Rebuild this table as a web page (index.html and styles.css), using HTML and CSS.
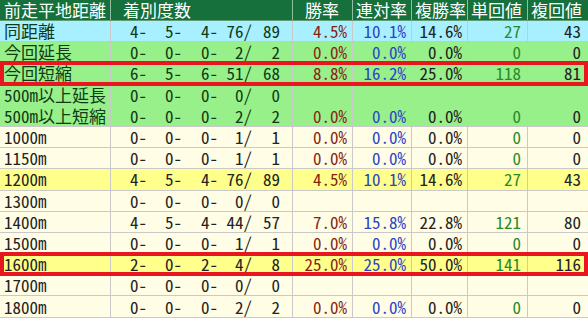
FILE: index.html
```html
<!DOCTYPE html>
<html lang="ja">
<head>
<meta charset="utf-8">
<link rel="stylesheet" href="styles.css">
</head>
<body>
<div class="table">
  <div class="row head">
    <div class="c l">前走平地距離</div>
    <div class="c h2">着別度数</div>
    <div class="c h3">勝率</div>
    <div class="c hx">連対率</div>
    <div class="c hx">複勝率</div>
    <div class="c hx">単回値</div>
    <div class="c hx">複回値</div>
  </div>

  <div class="row cyan">
    <div class="c l">同距離</div>
    <div class="c cnt"><span>4-</span><span>5-</span><span>4-</span><span>76/</span><span>89</span></div>
    <div class="c n win">4.5%</div><div class="c n ren">10.1%</div><div class="c n fuku">14.6%</div><div class="c n tan">27</div><div class="c n fk">43</div>
  </div>
  <div class="row green">
    <div class="c l">今回延長</div>
    <div class="c cnt"><span>0-</span><span>0-</span><span>0-</span><span>2/</span><span>2</span></div>
    <div class="c n win">0.0%</div><div class="c n ren">0.0%</div><div class="c n fuku">0.0%</div><div class="c n tan">0</div><div class="c n fk">0</div>
  </div>
  <div class="row green mark">
    <div class="c l">今回短縮</div>
    <div class="c cnt"><span>6-</span><span>5-</span><span>6-</span><span>51/</span><span>68</span></div>
    <div class="c n win">8.8%</div><div class="c n ren">16.2%</div><div class="c n fuku">25.0%</div><div class="c n tan">118</div><div class="c n fk">81</div>
  </div>
  <div class="row green">
    <div class="c l">500m以上延長</div>
    <div class="c cnt"><span>0-</span><span>0-</span><span>0-</span><span>0/</span><span>0</span></div>
    <div class="c n"></div><div class="c n"></div><div class="c n"></div><div class="c n"></div><div class="c n"></div>
  </div>
  <div class="row green">
    <div class="c l">500m以上短縮</div>
    <div class="c cnt"><span>0-</span><span>0-</span><span>0-</span><span>2/</span><span>2</span></div>
    <div class="c n win">0.0%</div><div class="c n ren">0.0%</div><div class="c n fuku">0.0%</div><div class="c n tan">0</div><div class="c n fk">0</div>
  </div>
  <div class="row cream">
    <div class="c l">1000m</div>
    <div class="c cnt"><span>0-</span><span>0-</span><span>0-</span><span>1/</span><span>1</span></div>
    <div class="c n win">0.0%</div><div class="c n ren">0.0%</div><div class="c n fuku">0.0%</div><div class="c n tan">0</div><div class="c n fk">0</div>
  </div>
  <div class="row cream">
    <div class="c l">1150m</div>
    <div class="c cnt"><span>0-</span><span>0-</span><span>0-</span><span>1/</span><span>1</span></div>
    <div class="c n win">0.0%</div><div class="c n ren">0.0%</div><div class="c n fuku">0.0%</div><div class="c n tan">0</div><div class="c n fk">0</div>
  </div>
  <div class="row yellow">
    <div class="c l">1200m</div>
    <div class="c cnt"><span>4-</span><span>5-</span><span>4-</span><span>76/</span><span>89</span></div>
    <div class="c n win">4.5%</div><div class="c n ren">10.1%</div><div class="c n fuku">14.6%</div><div class="c n tan">27</div><div class="c n fk">43</div>
  </div>
  <div class="row cream">
    <div class="c l">1300m</div>
    <div class="c cnt"><span>0-</span><span>0-</span><span>0-</span><span>0/</span><span>0</span></div>
    <div class="c n"></div><div class="c n"></div><div class="c n"></div><div class="c n"></div><div class="c n"></div>
  </div>
  <div class="row cream">
    <div class="c l">1400m</div>
    <div class="c cnt"><span>4-</span><span>5-</span><span>4-</span><span>44/</span><span>57</span></div>
    <div class="c n win">7.0%</div><div class="c n ren">15.8%</div><div class="c n fuku">22.8%</div><div class="c n tan">121</div><div class="c n fk">80</div>
  </div>
  <div class="row cream">
    <div class="c l">1500m</div>
    <div class="c cnt"><span>0-</span><span>0-</span><span>0-</span><span>1/</span><span>1</span></div>
    <div class="c n win">0.0%</div><div class="c n ren">0.0%</div><div class="c n fuku">0.0%</div><div class="c n tan">0</div><div class="c n fk">0</div>
  </div>
  <div class="row yellow mark">
    <div class="c l">1600m</div>
    <div class="c cnt"><span>2-</span><span>0-</span><span>2-</span><span>4/</span><span>8</span></div>
    <div class="c n win">25.0%</div><div class="c n ren">25.0%</div><div class="c n fuku">50.0%</div><div class="c n tan">141</div><div class="c n fk">116</div>
  </div>
  <div class="row cream">
    <div class="c l">1700m</div>
    <div class="c cnt"><span>0-</span><span>0-</span><span>0-</span><span>0/</span><span>0</span></div>
    <div class="c n"></div><div class="c n"></div><div class="c n"></div><div class="c n"></div><div class="c n"></div>
  </div>
  <div class="row cream">
    <div class="c l">1800m</div>
    <div class="c cnt"><span>0-</span><span>0-</span><span>0-</span><span>2/</span><span>2</span></div>
    <div class="c n win">0.0%</div><div class="c n ren">0.0%</div><div class="c n fuku">0.0%</div><div class="c n tan">0</div><div class="c n fk">0</div>
  </div>
</div>
</body>
</html>
```
FILE: styles.css
```css
html, body {
  margin: 0;
  padding: 0;
  background: #ffffff;
}

.table {
  width: 588px;
  font-family: "Noto Sans CJK JP", "DejaVu Sans", sans-serif;
  font-size: 17px;
  line-height: 20px;
  font-feature-settings: "hwid";
  color: #222;
}

.row {
  display: grid;
  grid-template-columns: 111px 182px 60px 59px 56px 60px 60px;
  height: 21.2px;
  box-sizing: border-box;
  border-bottom: 1px solid #c9c9c9;
  position: relative;
}

.c {
  box-sizing: border-box;
  border-right: 1px solid #c9c9c9;
  white-space: pre;
  display: flex;
  align-items: center;
}

.c:last-child {
  border-right: none;
}

.l {
  padding-left: 4px;
}

.head {
  height: 21px;
  background: #15703c;
  color: #ffffff;
  border-bottom: 1px solid #5f9c78;
}

.head .c {
  border-right-color: #8fbea0;
}

.head .h2 { padding-left: 12px; }
.head .h3 { padding-left: 12px; }
.head .hx { padding-left: 3px; }

.cnt {
  display: grid;
  grid-template-columns: 36px 35px 36px 34px 28px;
  justify-items: end;
  align-items: center;
}

.n {
  justify-content: flex-end;
  padding-right: 5px;
}

.n.tan { padding-right: 6px; }
.n.fk { padding-right: 7px; }

.win { color: #8a1f14; }
.ren { color: #2b45c9; }
.fuku { color: #222222; }
.tan { color: #2a8a2a; }
.fk { color: #222222; }

.cyan { background: #a8f0ff; }
.green { background: #98f08a; }
.cream { background: #fffde6; }
.yellow { background: #ffff8c; }

.cyan .l, .cyan .cnt,
.green .l, .green .cnt {
  color: #0f3a14;
}

.mark::after {
  content: "";
  position: absolute;
  left: 0;
  right: 0;
  top: -2px;
  bottom: -2px;
  border: 4px solid #e8161e;
  z-index: 1;
  pointer-events: none;
}
```
